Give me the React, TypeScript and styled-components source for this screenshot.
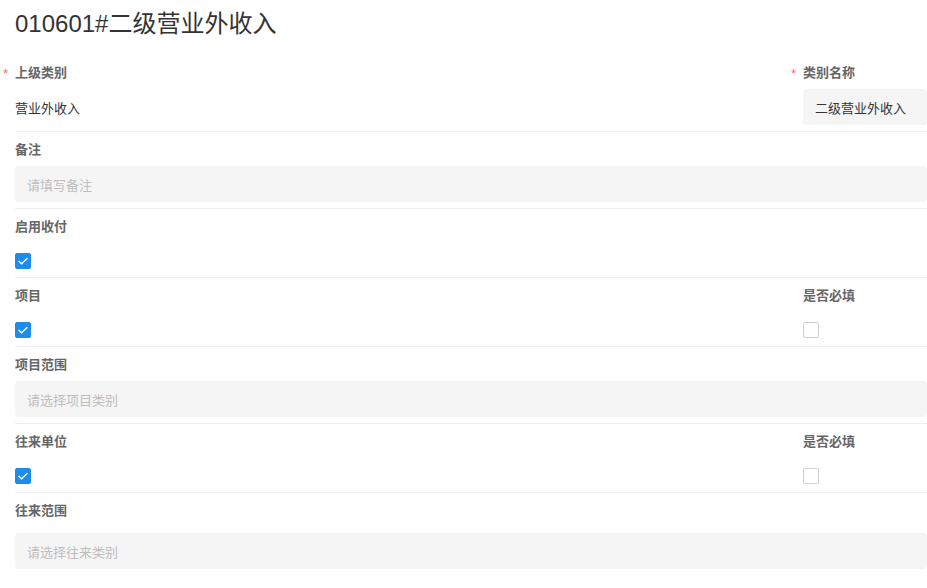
import React from "react";
import styled, { createGlobalStyle } from "styled-components";

const Global = createGlobalStyle`
  html, body { margin: 0; padding: 0; background: #fff; overflow: hidden; }
  body { font-family: "Liberation Sans", Arial, "Noto Sans CJK SC", sans-serif; }
`;

const Page = styled.div`
  width: 927px;
  padding: 0 0 0 15px;
  box-sizing: border-box;
`;

const Title = styled.h1`
  margin: 0;
  padding: 8px 0 15px;
  font-size: 24px;
  line-height: 32px;
  font-weight: normal;
  color: #333;
`;

const Section = styled.div`
  display: grid;
  grid-template-columns: 776px 124px;
  column-gap: 12px;
  padding: 8px 0 6px;
  border-bottom: 1px solid #eee;
  &:last-child { border-bottom: none; }
`;

const Field = styled.div<{ $span?: boolean }>`
  display: flex;
  flex-direction: column;
  grid-column: ${(p) => (p.$span ? "1 / -1" : "auto")};
`;

const Label = styled.label<{ $required?: boolean; $gap?: number }>`
  position: relative;
  display: block;
  font-size: 13px;
  line-height: 20px;
  font-weight: bold;
  color: #666;
  margin-bottom: ${(p) => p.$gap ?? 6}px;
  &::before {
    content: ${(p) => (p.$required ? '"*"' : '""')};
    position: absolute;
    left: -12px;
    top: 1px;
    color: #f56c6c;
    font-weight: normal;
    font-size: 13px;
  }
`;

const Value = styled.div`
  height: 36px;
  display: flex;
  align-items: center;
  font-size: 13px;
  color: #333;
`;

const Input = styled.div<{ $placeholder?: boolean }>`
  height: 36px;
  display: flex;
  align-items: center;
  padding: 0 12px;
  background: #f5f5f5;
  border-radius: 4px;
  font-size: 13px;
  white-space: nowrap;
  overflow: hidden;
  color: ${(p) => (p.$placeholder ? "#bdbdbd" : "#333")};
`;

const CheckRow = styled.div`
  padding: 10px 0 2px;
  display: flex;
`;

const Box = styled.span<{ $checked?: boolean }>`
  width: 16px;
  height: 16px;
  box-sizing: border-box;
  border-radius: 2px;
  display: flex;
  align-items: center;
  justify-content: center;
  background: ${(p) => (p.$checked ? "#1e8ceb" : "#fff")};
  border: 1px solid ${(p) => (p.$checked ? "#1e8ceb" : "#d0d0d0")};
`;

const Check: React.FC<{ checked?: boolean }> = ({ checked }) => (
  <CheckRow>
    <Box $checked={checked}>
      {checked && (
        <svg width="14" height="14" viewBox="0 0 14 14">
          <path d="M2.6 7 L5.6 9.8 L11.4 4.2" fill="none" stroke="#fff" strokeWidth="1.3" />
        </svg>
      )}
    </Box>
  </CheckRow>
);

export default function App() {
  return (
    <>
      <Global />
      <Page>
        <Title>010601#二级营业外收入</Title>
        <Section>
          <Field>
            <Label $required>上级类别</Label>
            <Value>营业外收入</Value>
          </Field>
          <Field>
            <Label $required>类别名称</Label>
            <Input>二级营业外收入</Input>
          </Field>
        </Section>
        <Section>
          <Field $span>
            <Label>备注</Label>
            <Input $placeholder>请填写备注</Input>
          </Field>
        </Section>
        <Section>
          <Field $span>
            <Label>启用收付</Label>
            <Check checked />
          </Field>
        </Section>
        <Section>
          <Field>
            <Label>项目</Label>
            <Check checked />
          </Field>
          <Field>
            <Label>是否必填</Label>
            <Check />
          </Field>
        </Section>
        <Section>
          <Field $span>
            <Label>项目范围</Label>
            <Input $placeholder>请选择项目类别</Input>
          </Field>
        </Section>
        <Section>
          <Field>
            <Label>往来单位</Label>
            <Check checked />
          </Field>
          <Field>
            <Label>是否必填</Label>
            <Check />
          </Field>
        </Section>
        <Section>
          <Field $span>
            <Label $gap={12}>往来范围</Label>
            <Input $placeholder>请选择往来类别</Input>
          </Field>
        </Section>
      </Page>
    </>
  );
}
